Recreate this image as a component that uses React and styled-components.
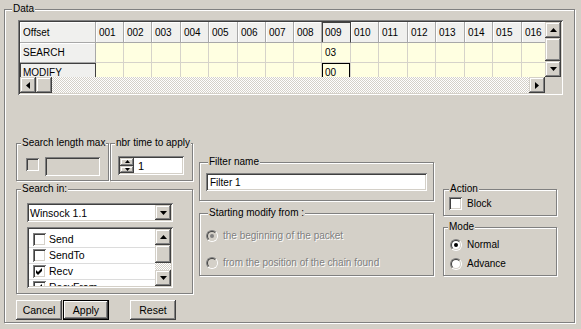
import React from "react";
import styled, { createGlobalStyle, css } from "styled-components";

const FACE = "#D4D0C8";
const SHADOW = "#808080";
const DARK = "#404040";
const HI = "#FFFFFF";

const GlobalStyle = createGlobalStyle`
  html, body { margin: 0; padding: 0; background: ${FACE}; }
  body { font-family: "Liberation Sans", Arial, sans-serif; font-size: 10px; color: #000; }
  * { box-sizing: border-box; }
`;

const sunken = css`
  box-shadow: inset 1px 1px 0 ${SHADOW}, inset -1px -1px 0 ${HI},
    inset 2px 2px 0 ${DARK}, inset -2px -2px 0 ${FACE};
`;

const raisedScroll = css`
  background: ${FACE};
  box-shadow: inset -1px -1px 0 ${DARK}, inset 1px 1px 0 ${FACE},
    inset -2px -2px 0 ${SHADOW}, inset 2px 2px 0 ${HI};
`;

const raisedButton = css`
  background: ${FACE};
  box-shadow: inset -1px -1px 0 ${DARK}, inset 1px 1px 0 ${HI},
    inset -2px -2px 0 ${SHADOW}, inset 2px 2px 0 ${FACE};
`;

const dither = css`
  background-color: ${HI};
  background-image: conic-gradient(${FACE} 25%, transparent 0 50%, ${FACE} 0 75%, transparent 0);
  background-size: 2px 2px;
`;

const Window = styled.div`
  width: 581px;
  height: 329px;
  padding: 9px 0 0 4px;
  background: ${FACE};
  overflow: hidden;
`;

const Group = styled.div`
  position: relative;
  flex: none;
  width: ${(p) => p.$w}px;
  height: ${(p) => p.$h}px;
  margin-top: ${(p) => p.$mt || 0}px;
  border: 1px solid ${SHADOW};
  box-shadow: inset 1px 1px 0 ${HI}, 1px 1px 0 ${HI};
`;

const Legend = styled.span`
  position: absolute;
  top: -7px;
  left: ${(p) => (p.$x ?? 4)}px;
  padding: 0 1px;
  background: ${FACE};
  font-size: 10px;
  line-height: 12px;
  white-space: nowrap;
`;

const DataBody = styled.div`
  display: flex;
  flex-direction: column;
  padding: 10px 0 0 11px;
`;

const GroupBody = styled.div`
  display: flex;
  flex-direction: ${(p) => (p.$column ? "column" : "row")};
  align-items: flex-start;
  gap: ${(p) => p.$gap || 0}px;
  padding: ${(p) => p.$pt || 0}px 0 0 ${(p) => p.$pl || 0}px;
`;

/* ---------- grid ---------- */
const GridFrame = styled.div`
  margin-left: 2px;
  width: 545px;
  height: 75px;
  padding: 2px;
  ${sunken}
  background: ${FACE};
  display: grid;
  grid-template-columns: 525px 16px;
  grid-template-rows: 55px 16px;
`;

const Viewport = styled.div`
  overflow: hidden;
  background: ${FACE};
`;

const Table = styled.div`
  display: grid;
  grid-template-columns: ${(p) => p.$cols};
  grid-template-rows: 21px 20px 20px;
  width: max-content;
`;

const Cell = styled.div`
  display: flex;
  align-items: center;
  padding: 0 3px;
  font-size: 10px;
  white-space: nowrap;
  overflow: hidden;
  background: ${(p) => (p.$fixed ? "#F0F0EE" : "#FFFFE1")};
  border-right: 1px solid ${(p) => (p.$fixed ? "#A8A8A8" : "#D6D3CA")};
  border-bottom: 1px solid ${(p) => (p.$fixed ? "#A8A8A8" : "#D6D3CA")};
  ${(p) =>
    p.$fixed &&
    css`
      box-shadow: inset 1px 1px 0 ${HI};
    `}
  ${(p) =>
    p.$marked &&
    css`
      box-shadow: inset 1px 1px 0 ${DARK};
      border-right-color: ${DARK};
    `}
  ${(p) =>
    p.$focused &&
    css`
      box-shadow: inset 0 0 0 1px #000;
    `}
`;

const VScroll = styled.div`
  display: flex;
  flex-direction: column;
  ${dither}
`;

const HScroll = styled.div`
  display: flex;
  ${dither}
`;

const Corner = styled.div`
  background: ${FACE};
`;

const ScrollBtn = styled.div`
  flex: none;
  width: ${(p) => p.$w || 16}px;
  height: ${(p) => p.$h || 16}px;
  display: flex;
  align-items: center;
  justify-content: center;
  margin-left: ${(p) => (p.$push ? "auto" : "0")};
  margin-top: ${(p) => (p.$pushDown ? "auto" : "0")};
  ${raisedScroll}
`;

const Arrow = ({ dir, size = 7 }) => {
  const h = Math.ceil(size / 2);
  if (dir === "up")
    return (
      <svg width={size} height={h} viewBox={`0 0 ${size} ${h}`}>
        <polygon points={`0,${h} ${size / 2},0 ${size},${h}`} fill="#000" />
      </svg>
    );
  if (dir === "down")
    return (
      <svg width={size} height={h} viewBox={`0 0 ${size} ${h}`}>
        <polygon points={`0,0 ${size},0 ${size / 2},${h}`} fill="#000" />
      </svg>
    );
  if (dir === "left")
    return (
      <svg width={h} height={size} viewBox={`0 0 ${h} ${size}`}>
        <polygon points={`${h},0 ${h},${size} 0,${size / 2}`} fill="#000" />
      </svg>
    );
  return (
    <svg width={h} height={size} viewBox={`0 0 ${h} ${size}`}>
      <polygon points={`0,0 ${h},${size / 2} 0,${size}`} fill="#000" />
    </svg>
  );
};

/* ---------- controls ---------- */
const Lower = styled.div`
  display: flex;
  margin-top: 48px;
`;

const Column = styled.div`
  display: flex;
  flex-direction: column;
  flex: none;
  width: ${(p) => p.$w}px;
  margin-left: ${(p) => p.$ml || 0}px;
  padding-top: ${(p) => p.$pt || 0}px;
`;

const GroupRow = styled.div`
  display: flex;
  gap: 1px;
`;

const CheckBox = styled.span`
  flex: none;
  display: inline-flex;
  width: 13px;
  height: 13px;
  margin-top: ${(p) => p.$mt || 0}px;
  background: ${(p) => (p.$disabled ? FACE : HI)};
  ${sunken}
`;

const Check = ({ checked, disabled, mt }) => (
  <CheckBox $disabled={disabled} $mt={mt}>
    {checked && (
      <svg width="13" height="13" viewBox="0 0 13 13">
        <path d="M3 5 L5 7 L9 3 L9 6 L5 10 L3 8 Z" fill="#000" />
      </svg>
    )}
  </CheckBox>
);

const RadioCircle = styled.span`
  position: relative;
  flex: none;
  display: inline-block;
  width: 12px;
  height: 12px;
  border-radius: 50%;
  border: 1px solid;
  border-color: ${SHADOW} ${HI} ${HI} ${SHADOW};
  &::before {
    content: "";
    position: absolute;
    inset: 0;
    border-radius: 50%;
    border: 1px solid;
    border-color: ${DARK} ${FACE} ${FACE} ${DARK};
    background: ${(p) => (p.$disabled ? FACE : HI)};
  }
  &::after {
    content: "";
    display: ${(p) => (p.$checked ? "block" : "none")};
    position: absolute;
    left: 3px;
    top: 3px;
    width: 4px;
    height: 4px;
    border-radius: 50%;
    background: ${(p) => (p.$disabled ? SHADOW : "#000")};
  }
`;

const OptionRow = styled.div`
  display: flex;
  align-items: center;
  gap: 5px;
  height: 13px;
  font-size: 10px;
  white-space: nowrap;
  color: ${(p) => (p.$disabled ? SHADOW : "#000")};
  text-shadow: ${(p) => (p.$disabled ? `1px 1px 0 ${HI}` : "none")};
`;

const TextField = styled.div`
  flex: none;
  width: ${(p) => p.$w}px;
  height: ${(p) => p.$h}px;
  padding: 0 4px;
  display: flex;
  align-items: center;
  font-size: 10px;
  background: ${(p) => (p.$disabled ? FACE : HI)};
  ${sunken}
`;

const SpinField = styled.div`
  width: 66px;
  height: 19px;
  padding: 2px;
  display: flex;
  align-items: stretch;
  background: ${HI};
  ${sunken}
`;

const SpinButtons = styled.div`
  flex: none;
  width: 14px;
  display: flex;
  flex-direction: column;
`;

const SpinBtn = styled.div`
  flex: 1;
  display: flex;
  align-items: center;
  justify-content: center;
  ${raisedScroll}
`;

const SpinValue = styled.span`
  display: flex;
  align-items: center;
  padding-left: 4px;
  font-size: 11px;
`;

const Combo = styled.div`
  width: 146px;
  height: 19px;
  padding: 2px;
  display: flex;
  align-items: stretch;
  background: ${HI};
  ${sunken}
`;

const ComboText = styled.span`
  flex: 1;
  display: flex;
  align-items: center;
  padding-left: 1px;
  font-size: 10.5px;
`;

const ListBox = styled.div`
  width: 146px;
  height: 61px;
  padding: 2px;
  display: flex;
  background: ${HI};
  ${sunken}
`;

const ListItems = styled.div`
  flex: 1;
  padding-top: 3px;
  overflow: hidden;
`;

const ListItem = styled.div`
  height: 16px;
  display: flex;
  align-items: flex-start;
  gap: 3px;
  padding: 1px 0 0 4px;
  font-size: 10.5px;
  line-height: 13px;
  border-bottom: 1px solid #DCDCDC;
`;

const ListScroll = styled.div`
  flex: none;
  width: 16px;
  display: flex;
  flex-direction: column;
  ${dither}
`;

const ButtonRow = styled.div`
  display: flex;
  gap: 1px;
  margin-top: 6px;
`;

const Button = styled.button`
  width: 46px;
  height: 20px;
  margin: 0 0 0 ${(p) => p.$ml || 0}px;
  padding: 0;
  border: ${(p) => (p.$default ? "1px solid #000" : "none")};
  font-family: "Liberation Sans", Arial, sans-serif;
  font-size: 10.5px;
  color: #000;
  ${raisedButton}
`;

const COLS = ["Offset", ...Array.from({ length: 16 }, (_, i) => String(i + 1).padStart(3, "0"))];
const COL_W = [76, 28, 28, 29, 28, 29, 28, 28, 28, 29, 28, 29, 28, 29, 28, 29, 28];
const SEL_COL = 9;
const ROWS = [
  { name: "SEARCH", values: { 9: "03" } },
  { name: "MODIFY", values: { 9: "00" }, current: true },
];

const LIST = [
  { label: "Send", checked: false },
  { label: "SendTo", checked: false },
  { label: "Recv", checked: true },
  { label: "RecvFrom", checked: true },
];

function DataGrid() {
  return (
    <GridFrame>
      <Viewport>
        <Table $cols={COL_W.map((w) => `${w}px`).join(" ")}>
          {COLS.map((c, i) => (
            <Cell key={c} $fixed $marked={i === SEL_COL}>
              {c}
            </Cell>
          ))}
          {ROWS.map((r) => (
            <React.Fragment key={r.name}>
              <Cell $fixed $marked={r.current}>
                {r.name}
              </Cell>
              {COLS.slice(1).map((c, j) => (
                <Cell key={c} $focused={r.current && j + 1 === SEL_COL}>
                  {r.values[j + 1] || ""}
                </Cell>
              ))}
            </React.Fragment>
          ))}
        </Table>
      </Viewport>
      <VScroll>
        <ScrollBtn>
          <Arrow dir="up" />
        </ScrollBtn>
        <ScrollBtn $h={23} />
        <ScrollBtn>
          <Arrow dir="down" />
        </ScrollBtn>
      </VScroll>
      <HScroll>
        <ScrollBtn>
          <Arrow dir="left" />
        </ScrollBtn>
        <ScrollBtn />
        <ScrollBtn $push>
          <Arrow dir="right" />
        </ScrollBtn>
      </HScroll>
      <Corner />
    </GridFrame>
  );
}

export default function App() {
  return (
    <>
      <GlobalStyle />
      <Window>
        <Group $w={571} $h={314}>
          <Legend $x={7}>Data</Legend>
          <DataBody>
            <DataGrid />
            <Lower>
              <Column $w={177}>
                <GroupRow>
                  <Group $w={93} $h={38}>
                    <Legend>Search length max</Legend>
                    <GroupBody $pt={13} $pl={9} $gap={6}>
                      <Check disabled mt={1} />
                      <TextField $w={55} $h={19} $disabled />
                    </GroupBody>
                  </Group>
                  <Group $w={83} $h={38}>
                    <Legend>nbr time to apply</Legend>
                    <GroupBody $pt={12} $pl={7}>
                      <SpinField>
                        <SpinButtons>
                          <SpinBtn>
                            <Arrow dir="up" size={5} />
                          </SpinBtn>
                          <SpinBtn>
                            <Arrow dir="down" size={5} />
                          </SpinBtn>
                        </SpinButtons>
                        <SpinValue>1</SpinValue>
                      </SpinField>
                    </GroupBody>
                  </Group>
                </GroupRow>
                <Group $w={177} $h={105} $mt={8}>
                  <Legend>Search in:</Legend>
                  <GroupBody $column $pt={13} $pl={10} $gap={5}>
                    <Combo>
                      <ComboText>Winsock 1.1</ComboText>
                      <ScrollBtn $w={16} $h={15}>
                        <Arrow dir="down" />
                      </ScrollBtn>
                    </Combo>
                    <ListBox>
                      <ListItems>
                        {LIST.map((it) => (
                          <ListItem key={it.label}>
                            <Check checked={it.checked} />
                            {it.label}
                          </ListItem>
                        ))}
                      </ListItems>
                      <ListScroll>
                        <ScrollBtn>
                          <Arrow dir="up" />
                        </ScrollBtn>
                        <ScrollBtn $h={18} />
                        <ScrollBtn $pushDown>
                          <Arrow dir="down" />
                        </ScrollBtn>
                      </ListScroll>
                    </ListBox>
                  </GroupBody>
                </Group>
                <ButtonRow>
                  <Button>Cancel</Button>
                  <Button $default>Apply</Button>
                  <Button $ml={20}>Reset</Button>
                </ButtonRow>
              </Column>

              <Column $w={235} $ml={6} $pt={19}>
                <Group $w={235} $h={39}>
                  <Legend $x={8}>Filter name</Legend>
                  <GroupBody $pt={10} $pl={6}>
                    <TextField $w={221} $h={18}>Filter 1</TextField>
                  </GroupBody>
                </Group>
                <Group $w={235} $h={63} $mt={12}>
                  <Legend $x={8}>Starting modify from :</Legend>
                  <GroupBody $column $pt={15} $pl={6} $gap={14}>
                    <OptionRow $disabled>
                      <RadioCircle $checked $disabled />
                      the beginning of the packet
                    </OptionRow>
                    <OptionRow $disabled>
                      <RadioCircle $disabled />
                      from the position of the chain found
                    </OptionRow>
                  </GroupBody>
                </Group>
              </Column>

              <Column $w={114} $ml={9} $pt={46}>
                <Group $w={114} $h={27}>
                  <Legend $x={5}>Action</Legend>
                  <GroupBody $pt={7} $pl={5}>
                    <OptionRow>
                      <Check />
                      Block
                    </OptionRow>
                  </GroupBody>
                </Group>
                <Group $w={114} $h={49} $mt={11}>
                  <Legend>Mode</Legend>
                  <GroupBody $column $pt={10} $pl={6} $gap={6}>
                    <OptionRow>
                      <RadioCircle $checked />
                      Normal
                    </OptionRow>
                    <OptionRow>
                      <RadioCircle />
                      Advance
                    </OptionRow>
                  </GroupBody>
                </Group>
              </Column>
            </Lower>
          </DataBody>
        </Group>
      </Window>
    </>
  );
}
